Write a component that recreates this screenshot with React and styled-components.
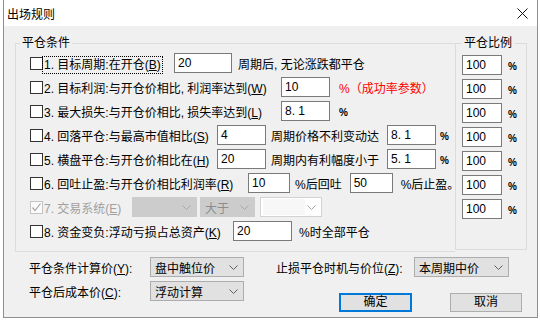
import React from "react";
import styled, { createGlobalStyle } from "styled-components";

const GlobalStyle = createGlobalStyle`
  html, body {
    margin: 0;
    padding: 0;
    background: #ffffff;
  }
  body {
    font-family: "Liberation Sans", "Noto Sans CJK SC", sans-serif;
    font-size: 12px;
    color: #000;
  }
  * {
    box-sizing: border-box;
  }
`;

const Chevron = ({ color = "#606060" }) => (
  <svg width="9" height="5" viewBox="0 0 9 5">
    <path d="M0.5 0.5 L4.5 4.5 L8.5 0.5" fill="none" stroke={color} strokeWidth="1" />
  </svg>
);

const Checkbox = ({ disabled, checked }) => (
  <Check $disabled={disabled}>
    {checked && (
      <svg width="11" height="11" viewBox="0 0 11 11">
        <path d="M1.5 5.5 L4 8.5 L9.5 1.5" fill="none" stroke="#a6a6a6" strokeWidth="1.2" />
      </svg>
    )}
  </Check>
);

const App = () => {
  return (
    <>
      <GlobalStyle />
      <Window>
        <TitleBar>
          <Title>出场规则</Title>
          <svg width="11" height="11" viewBox="0 0 11 11">
            <path d="M0.5 0.5 L10.5 10.5 M10.5 0.5 L0.5 10.5" stroke="#111" strokeWidth="1" />
          </svg>
        </TitleBar>

        <Body>
          <TopRow>
            <Group $w={440} $h={216} $noRight>
              <Legend $ml={4}>平仓条件</Legend>
              <Rows>
                <Row>
                  <Checkbox />
                  <Label $w={131}>
                    <Focus>
                      1. 目标周期:在开仓(<u>B</u>)
                    </Focus>
                  </Label>
                  <Field $w={58}>20</Field>
                  <Text $ml={6}>周期后, 无论涨跌都平仓</Text>
                </Row>
                <Row>
                  <Checkbox />
                  <Label $w={238}>
                    2. 目标利润:与开仓价相比, 利润率达到(<u>W</u>)
                  </Label>
                  <Field $w={49}>10</Field>
                  <Text $ml={9} $red>
                    %（成功率参数）
                  </Text>
                </Row>
                <Row>
                  <Checkbox />
                  <Label $w={238}>
                    3. 最大损失:与开仓价相比, 损失率达到(<u>L</u>)
                  </Label>
                  <Field $w={49}>8. 1</Field>
                  <Percent $ml={9}>%</Percent>
                </Row>
                <Row>
                  <Checkbox />
                  <Label $w={174}>
                    4. 回落平仓:与最高市值相比(<u>S</u>)
                  </Label>
                  <Field $w={49}>4</Field>
                  <Text $ml={5}>周期价格不利变动达</Text>
                  <Field $w={49} $ml={8}>
                    8. 1
                  </Field>
                  <Percent $ml={4}>%</Percent>
                </Row>
                <Row>
                  <Checkbox />
                  <Label $w={174}>
                    5. 横盘平仓:与开仓价相比在(<u>H</u>)
                  </Label>
                  <Field $w={49}>20</Field>
                  <Text $ml={5}>周期内有利幅度小于</Text>
                  <Field $w={49} $ml={8}>
                    5. 1
                  </Field>
                  <Percent $ml={4}>%</Percent>
                </Row>
                <Row>
                  <Checkbox />
                  <Label $w={205}>
                    6. 回吐止盈:与开仓价相比利润率(<u>R</u>)
                  </Label>
                  <Field $w={42}>10</Field>
                  <Text $ml={5}>%后回吐</Text>
                  <Field $w={43} $ml={8}>
                    50
                  </Field>
                  <Text $ml={8}>%后止盈。</Text>
                </Row>
                <Row>
                  <Checkbox disabled checked />
                  <Label $w={89} $disabled>
                    7. 交易系统(<u>E</u>)
                  </Label>
                  <Combo $w={65} $disabled />
                  <Combo $w={55} $ml={3} $disabled>
                    大于
                  </Combo>
                  <Combo $w={62} $ml={5} $blank />
                </Row>
                <Row>
                  <Checkbox />
                  <Label $w={190}>
                    8. 资金变负:浮动亏损占总资产(<u>K</u>)
                  </Label>
                  <Field $w={59}>20</Field>
                  <Text $ml={7}>%时全部平仓</Text>
                </Row>
              </Rows>
            </Group>

            <Group $w={72} $h={214}>
              <Legend $ml={6}>平仓比例</Legend>
              <RatioRows>
                {[0, 1, 2, 3, 4, 5, 6].map((i) => (
                  <Row key={i}>
                    <Field $w={40}>100</Field>
                    <Percent $ml={6}>%</Percent>
                  </Row>
                ))}
              </RatioRows>
            </Group>
          </TopRow>

          <Bottom>
            <BottomCol>
              <BottomRow>
                <BottomLabel $w={121}>
                  平仓条件计算价(<u>Y</u>):
                </BottomLabel>
                <Combo $w={94}>盘中触位价</Combo>
              </BottomRow>
              <BottomRow>
                <BottomLabel $w={121}>
                  平仓后成本价(<u>C</u>):
                </BottomLabel>
                <Combo $w={94}>浮动计算</Combo>
              </BottomRow>
            </BottomCol>

            <RightCol>
              <BottomRow>
                <BottomLabel $w={138}>
                  止损平仓时机与价位(<u>Z</u>):
                </BottomLabel>
                <Combo $w={95}>本周期中价</Combo>
              </BottomRow>
              <Buttons>
                <Button $w={73} $primary>
                  确定
                </Button>
                <Button $w={72} $ml={38}>
                  取消
                </Button>
              </Buttons>
            </RightCol>
          </Bottom>
        </Body>
      </Window>
    </>
  );
};

const Window = styled.div`
  margin-left: 3px;
  width: 535px;
  height: 318px;
  border: 1px solid #8e8e8e;
  border-top: none;
  background: #f0f0f0;
  display: flex;
  flex-direction: column;
`;

const TitleBar = styled.div`
  height: 26px;
  flex: none;
  background: #ffffff;
  display: flex;
  align-items: center;
  justify-content: space-between;
  padding: 0 9px 0 3px;
`;

const Title = styled.span`
  font-size: 12px;
  color: #000;
`;

const Body = styled.div`
  flex: 1;
  padding-top: 10px;
  display: flex;
  flex-direction: column;
`;

const TopRow = styled.div`
  display: flex;
  align-items: flex-start;
  padding-left: 11px;
`;

const Group = styled.fieldset`
  margin: 0;
  padding: 0;
  min-width: 0;
  width: ${(p) => p.$w}px;
  height: ${(p) => p.$h}px;
  border: 1px solid #dcdcdc;
  border-right: ${(p) => (p.$noRight ? "none" : "1px solid #dcdcdc")};
`;

const Legend = styled.legend`
  margin-left: ${(p) => p.$ml}px;
  padding: 0 2px;
  font-size: 12px;
  line-height: 14px;
`;

const Rows = styled.div`
  padding: 1px 0 0 14px;
`;

const RatioRows = styled.div`
  padding: 3px 0 0 6px;
`;

const Row = styled.div`
  display: flex;
  align-items: center;
  height: 24px;
  white-space: nowrap;
`;

const Check = styled.span`
  flex: none;
  width: 13px;
  height: 13px;
  border: 1px solid ${(p) => (p.$disabled ? "#c4c4c4" : "#333333")};
  background: ${(p) => (p.$disabled ? "#fbfbfb" : "#ffffff")};
  display: flex;
  align-items: center;
  justify-content: center;
`;

const Label = styled.span`
  flex: none;
  width: ${(p) => p.$w}px;
  padding-left: 1px;
  color: ${(p) => (p.$disabled ? "#a0a0a0" : "#000")};
  overflow: visible;
`;

const Focus = styled.span`
  outline: 1px dotted #000;
  outline-offset: 1px;
`;

const Field = styled.div`
  flex: none;
  width: ${(p) => p.$w}px;
  height: 20px;
  margin-left: ${(p) => p.$ml || 0}px;
  border: 1px solid #7a7a7a;
  background: #ffffff;
  padding-left: 3px;
  font-family: "Liberation Sans", sans-serif;
  font-size: 12px;
  line-height: 18px;
  white-space: pre;
`;

const Text = styled.span`
  margin-left: ${(p) => p.$ml || 0}px;
  color: ${(p) => (p.$red ? "#ff0000" : "#000")};
`;

const Percent = styled.span`
  margin-left: ${(p) => p.$ml || 0}px;
  font-size: 10px;
  font-weight: bold;
  padding-top: 3px;
`;

const ComboBox = styled.div`
  flex: none;
  width: ${(p) => p.$w}px;
  height: 20px;
  margin-left: ${(p) => p.$ml || 0}px;
  display: flex;
  align-items: center;
  justify-content: space-between;
  padding: 0 5px 0 4px;
  border: 1px solid ${(p) => (p.$disabled ? "#cccccc" : p.$blank ? "#d2d2d2" : "#adadad")};
  background: ${(p) => (p.$disabled ? "#cccccc" : p.$blank ? "#ffffff" : "#e1e1e1")};
  color: ${(p) => (p.$disabled ? "#8d8d8d" : "#000")};
  font-size: 12px;
`;

const BlankInner = styled.span`
  width: 42px;
  height: 16px;
  margin-left: -2px;
  background: #f7f7f7;
`;

const Combo = ({ children, $blank, $disabled, ...rest }) => (
  <ComboBox $blank={$blank} $disabled={$disabled} {...rest}>
    {$blank ? <BlankInner /> : <span>{children}</span>}
    <Chevron color={$disabled || $blank ? "#a8a8a8" : "#606060"} />
  </ComboBox>
);

const Bottom = styled.div`
  display: flex;
  margin-top: 5px;
  padding-left: 25px;
`;

const BottomCol = styled.div`
  display: flex;
  flex-direction: column;
  gap: 4px;
`;

const RightCol = styled.div`
  display: flex;
  flex-direction: column;
  margin-left: 32px;
`;

const BottomRow = styled.div`
  display: flex;
  align-items: center;
  height: 20px;
  white-space: nowrap;
`;

const BottomLabel = styled.span`
  flex: none;
  width: ${(p) => p.$w}px;
`;

const Buttons = styled.div`
  display: flex;
  margin-top: 16px;
  padding-left: 63px;
`;

const Button = styled.button`
  width: ${(p) => p.$w}px;
  height: 19px;
  margin: 0 0 0 ${(p) => p.$ml || 0}px;
  padding: 0;
  background: #e1e1e1;
  border: ${(p) => (p.$primary ? "2px solid #0078d7" : "1px solid #adadad")};
  font-family: "Liberation Sans", "Noto Sans CJK SC", sans-serif;
  font-size: 12px;
  color: #000;
  line-height: 15px;
`;

export default App;
